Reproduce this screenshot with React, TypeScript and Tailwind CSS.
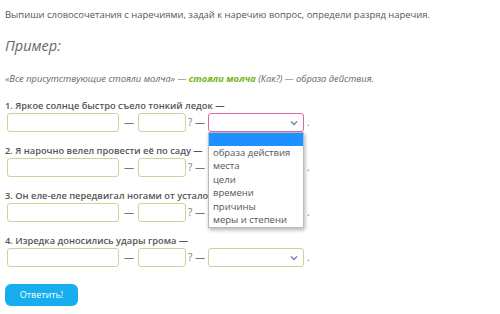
import React from "react";

const Chevron = () => (
  <svg width="8" height="6" viewBox="0 0 8 6" className="absolute right-[5px] top-[6px]">
    <path d="M1 1.5 L4 4.5 L7 1.5" fill="none" stroke="#7a7f95" strokeWidth="1.3" />
  </svg>
);

const Row = ({ label, open, first }: { label: string; open?: boolean; first?: boolean }) => (
  <div className={first ? "mt-[13px]" : "mt-[12px]"}>
    <div className="h-[14px] text-[9.3px] font-semibold leading-[14px] text-[#555] whitespace-nowrap">
      {label}
    </div>
    <div className="flex items-center pl-[2px] text-[10px] text-[#777]">
      <div className="w-[112px] h-[19px] border border-[#cfd39a] rounded-[3px] bg-white" />
      <span className="ml-[5px] mr-[4px]">—</span>
      <div className="w-[48px] h-[19px] border border-[#cfd39a] rounded-[3px] bg-white" />
      <span className="ml-[2px] mr-[3px] whitespace-nowrap">? —</span>
      <div className="relative">
        <div
          className={
            "relative w-[96px] h-[19px] border rounded-[3px] bg-white " +
            (open ? "border-[#d46aa8]" : "border-[#cfd39a]")
          }
        >
          <Chevron />
        </div>
        {open && (
          <div className="absolute left-0 top-[19px] w-[96px] z-10 bg-white border border-[#bbb] shadow-[1px_2px_4px_rgba(0,0,0,0.3)] text-[9.5px] leading-[13.4px] text-[#555]">
            <div className="h-[13px] bg-[#1e90ff]" />
            {["образа действия", "места", "цели", "времени", "причины", "меры и степени"].map((o) => (
              <div key={o} className="pl-[4px] whitespace-nowrap">
                {o}
              </div>
            ))}
            <div className="h-[1px]" />
          </div>
        )}
      </div>
      <span className="ml-[3px]">.</span>
    </div>
  </div>
);

export default function App() {
  return (
    <div
      className="w-[500px] h-[314px] bg-white px-[5px] pt-[7px] overflow-hidden"
      style={{ fontFamily: '"Open Sans", sans-serif' }}
    >
      <div className="h-[15px] text-[9.45px] leading-[15px] text-[#555] whitespace-nowrap">
        Выпиши словосочетания с наречиями, задай к наречию вопрос, определи разряд наречия.
      </div>
      <div className="mt-[14px] h-[20px] text-[14.5px] italic leading-[20px] text-[#666]">Пример:</div>
      <div className="mt-[16px] h-[14px] text-[9.3px] italic leading-[14px] text-[#666] whitespace-nowrap">
        «Все присутствующие стояли молча» —{" "}
        <span className="font-bold text-[#7ab317]">стояли молча</span> (Как?) — образа действия.
      </div>
      <Row label="1. Яркое солнце быстро съело тонкий ледок —" open first />
      <Row label="2. Я нарочно велел провести её по саду —" />
      <Row label="3. Он еле-еле передвигал ногами от усталости —" />
      <Row label="4. Изредка доносились удары грома —" />
      <button className="block mt-[17px] w-[73px] h-[22px] rounded-[6px] bg-[#17aef0] text-white text-[9px] leading-[22px]">
        Ответить!
      </button>
    </div>
  );
}
